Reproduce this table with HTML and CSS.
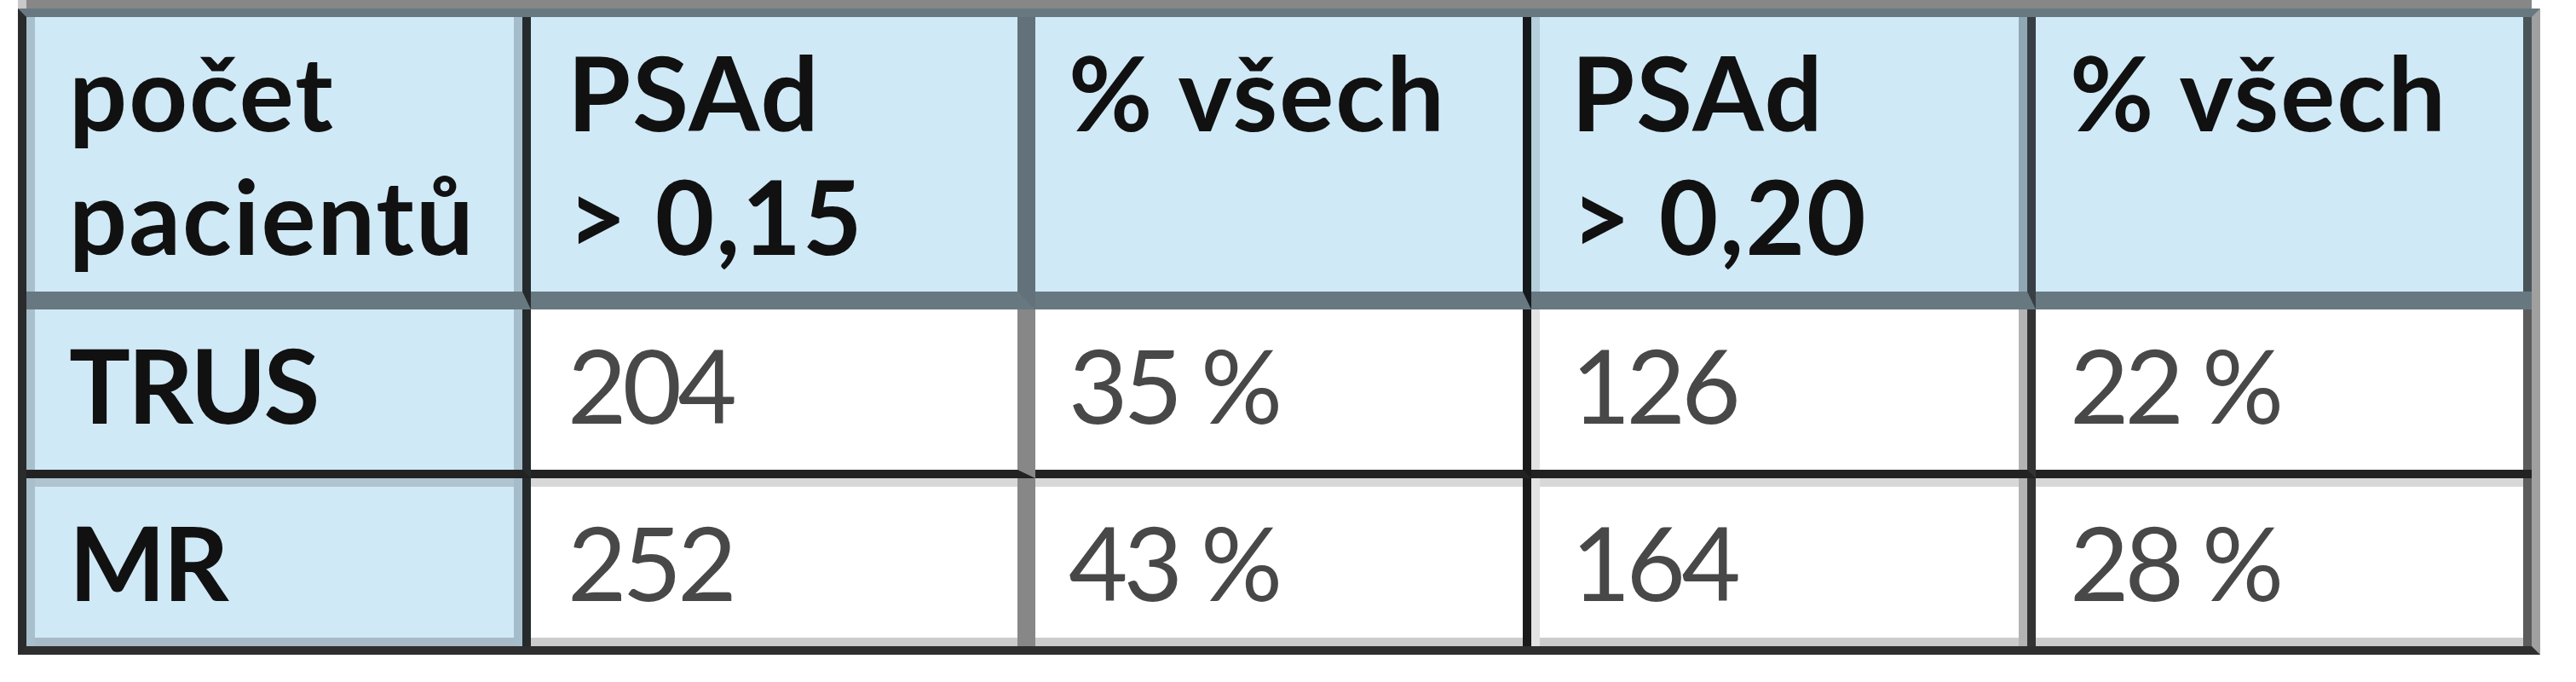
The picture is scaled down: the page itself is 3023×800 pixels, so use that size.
FILE: index.html
```html
<!DOCTYPE html>
<html lang="cs">
<head>
<meta charset="utf-8">
<title>PSAd</title>
<link rel="stylesheet" href="styles.css">
</head>
<body>
<div class="topband"></div>
<div class="grid">
  <div class="cell h c1">počet<br>pacientů</div>
  <div class="cell h c2">PSAd<br>&gt; 0,15</div>
  <div class="cell h c3">% všech</div>
  <div class="cell h c4">PSAd<br>&gt; 0,20</div>
  <div class="cell h c5">% všech</div>

  <div class="cell r1 c1 lab">TRUS</div>
  <div class="cell r1 c2 w">204</div>
  <div class="cell r1 c3 w">35 %</div>
  <div class="cell r1 c4 w">126</div>
  <div class="cell r1 c5 w">22 %</div>

  <div class="cell r2 c1 lab">MR</div>
  <div class="cell r2 c2 w">252</div>
  <div class="cell r2 c3 w">43 %</div>
  <div class="cell r2 c4 w">164</div>
  <div class="cell r2 c5 w">28 %</div>
</div>
</body>
</html>
```
FILE: styles.css
```css
html, body {
  margin: 0;
  padding: 0;
  background: #ffffff;
}

body {
  font-family: "Lato", "Open Sans", sans-serif;
  font-size: 120px;
  line-height: 145px;
}

.topband {
  margin-left: 21px;
  width: 2940px;
  height: 10px;
  background: #878787;
  border-left: 10px solid #c8c8c8;
}

.grid {
  display: grid;
  grid-template-columns: 592px 592px 582px 592px 582px;
  grid-template-rows: 343px 198px 197px;
  width: 2940px;
  margin-left: 21px;
  border-left: 10px solid #2a2b2c;
  border-top: 10px solid #677880;
  border-right: 10px solid #a0a0a0;
  border-bottom: 10px solid #2e2e2e;
}

.cell {
  box-sizing: border-box;
  background: #d0e9f6;
  color: #111111;
  font-weight: 700;
  letter-spacing: 2px;
  white-space: nowrap;
  --lw: 0px;
  --rw: 0px;
  --tw: 0px;
  --bw: 0px;
  --lc: transparent;
  --rc: transparent;
  --tc: transparent;
  --bc: transparent;
  box-shadow:
    inset var(--lw) 0 0 var(--lc),
    inset calc(var(--rw) * -1) 0 0 var(--rc),
    inset 0 var(--tw) 0 var(--tc),
    inset 0 calc(var(--bw) * -1) 0 var(--bc);
}

.lab {
  letter-spacing: -3px;
}

/* columns */
.c1 {
  padding-left: 50px;
  border-right: 10px solid #252a2c;
  --lw: 10px;
  --lc: #a8bfcc;
  --rw: 10px;
  --rc: #a5bccb;
}
.c2 {
  padding-left: 43px;
  border-right: 21px solid #62717a;
}
.c3 {
  padding-left: 39px;
  border-right: 10px solid #15191b;
}
.c4 {
  padding-left: 47px;
  border-right: 10px solid #383f44;
  --lw: 10px;
  --lc: #b5cfdb;
  --rw: 10px;
  --rc: #8fa8b4;
}
.c5 {
  padding-left: 40px;
  --rw: 10px;
  --rc: #4a5458;
}

/* rows */
.h {
  padding-top: 16px;
  border-bottom: 21px solid #687880;
}
.r1 {
  padding-top: 16px;
  border-bottom: 10px solid #222222;
}
.r2 {
  padding-top: 26px;
  --tw: 10px;
  --bw: 10px;
  --tc: #d8d8d8;
  --bc: #cccccc;
}
.r2.c1 {
  --tc: #b0c4d0;
  --bc: #a8bac6;
}

/* white data cells */
.w {
  background: #ffffff;
  color: #484848;
  font-weight: 400;
  letter-spacing: -5px;
}
.w.c2 {
  border-right-color: #878787;
}
.w.c3 {
  border-right-color: #1a1a1a;
}
.w.c4 {
  border-right-color: #333333;
  --lc: #e3e3e3;
  --rc: #b3b3b3;
}
.w.c5 {
  --rc: #5c5c5c;
}
```
